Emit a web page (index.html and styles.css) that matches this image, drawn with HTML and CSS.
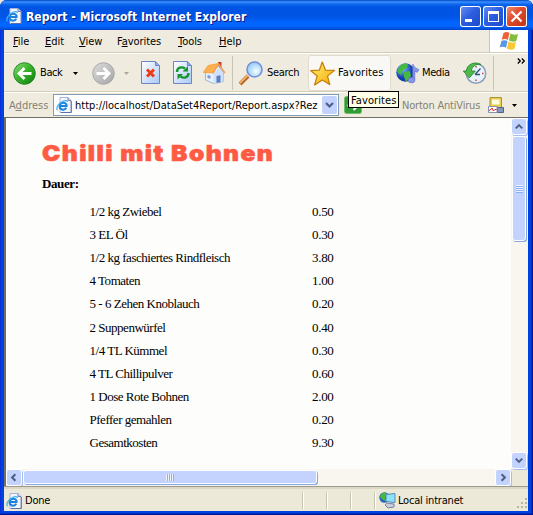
FILE: index.html
```
<!DOCTYPE html>
<html lang="de">
<head>
<meta charset="utf-8">
<title>Report - Microsoft Internet Explorer</title>
<link rel="stylesheet" href="styles.css">
</head>
<body>
<svg class="defs" width="0" height="0">
  <defs>
    <linearGradient id="green" x1="0" y1="0" x2="1" y2="1"><stop offset="0" stop-color="#8fdc7d"/><stop offset=".45" stop-color="#3bb52c"/><stop offset="1" stop-color="#0c7c0c"/></linearGradient>
    <linearGradient id="gray" x1="0" y1="0" x2="1" y2="1"><stop offset="0" stop-color="#dcdcdc"/><stop offset="1" stop-color="#a5a5a5"/></linearGradient>
    <linearGradient id="paper" x1="0" y1="0" x2="1" y2="1"><stop offset="0" stop-color="#fff"/><stop offset="1" stop-color="#aac8f8"/></linearGradient>
    <linearGradient id="gold" x1="0" y1="0" x2="1" y2="1"><stop offset="0" stop-color="#fff27a"/><stop offset="1" stop-color="#f5a800"/></linearGradient>
    <radialGradient id="lens" cx=".6" cy=".6"><stop offset="0" stop-color="#f4fdff"/><stop offset="1" stop-color="#a5d4fb"/></radialGradient>
    <radialGradient id="globe" cx=".35" cy=".3"><stop offset="0" stop-color="#7cc4ff"/><stop offset="1" stop-color="#123cae"/></radialGradient>
    <symbol id="ie" viewBox="0 0 16 16">
      <path d="M4 .5h8l3 3v12H4z" fill="#f2f7ff" stroke="#a5b4dc"/>
      <path d="M12 .5v3h3" fill="#c5d5f4" stroke="#7180b4"/>
      <path d="M15.300 4v11.500H5" fill="none" stroke="#5e6ca6"/>
      <path d="M10.300 10.800c-1 1.700-2.600 2.200-4.200 1.700-1.700-.5-2.700-1.800-2.400-3.500.3-2 2-3.300 3.900-3.200 2.100.1 3.200 1.500 3 3.200H4.500" fill="none" stroke="#1b83dc" stroke-width="2"/>
      <path d="M1.500 13.200C-.5 10.500 3 6 7 4.200c2.200-1 4.400-.9 4.300.8" fill="none" stroke="#45aeec" stroke-width="1.200"/>
    </symbol>
  </defs>
</svg>
<div class="window">
  <header class="titlebar">
    <svg class="title-icon" width="16" height="16"><use href="#ie"/></svg>
    <h1 class="title">Report - Microsoft Internet Explorer</h1>
    <div class="caption">
      <svg class="cap-btn" viewBox="0 0 21 21"><path d="M5 13h7v3H5z" fill="#fff"/></svg>
      <svg class="cap-btn" viewBox="0 0 21 21"><path d="M5 5h11v11H5zM6 8v7h9V8z" fill="#fff" fill-rule="evenodd"/></svg>
      <svg class="cap-btn close" viewBox="0 0 21 21"><path d="M5.500 5.500l10 10m0-10l-10 10" stroke="#fff" stroke-width="2.200"/></svg>
    </div>
  </header>

  <nav class="menubar">
    <span class="menu m-file"><u>F</u>ile</span>
    <span class="menu m-edit"><u>E</u>dit</span>
    <span class="menu m-view"><u>V</u>iew</span>
    <span class="menu m-fav">F<u>a</u>vorites</span>
    <span class="menu m-tools"><u>T</u>ools</span>
    <span class="menu m-help"><u>H</u>elp</span>
    <span class="flag">
      <svg width="20" height="20" viewBox="0 0 20 20">
        <path d="M4.500 2Q7.500.2 10.500 2L8.800 9Q6 7.300 2.700 8.700z" fill="#ed6137"/>
        <path d="M11.500 2.500q3.500 2 7.500.5L17.300 10q-3.800 1.500-7.500-.5z" fill="#83bd3b"/>
        <path d="M2.500 9.700Q5.500 8.500 8.600 10L7 16.800Q4 15 .7 16.500z" fill="#5797e5"/>
        <path d="M9.500 10.500q3.500 2 7.500.5L15.300 18q-3.800 1.500-7.500-.5z" fill="#f9c830"/>
      </svg>
    </span>
  </nav>

  <div class="toolbar">
    <svg class="i-back" width="23" height="23" viewBox="0 0 23 23"><circle cx="11.500" cy="11.500" r="10.800" fill="url(#green)" stroke="#26882a"/><path d="M18.500 11.500H6m5.500-5.500L6 11.500l5.500 5.500" fill="none" stroke="#fff" stroke-width="2.800"/></svg>
    <span class="t-back">Back</span>
    <svg class="i-drop" width="5" height="3"><path d="M0 0h5L2.500 3z" fill="#000"/></svg>
    <svg class="i-fwd" width="23" height="23" viewBox="0 0 23 23"><circle cx="11.500" cy="11.500" r="10.800" fill="url(#gray)" stroke="#a8a8a8"/><path d="M4.500 11.500H17m-5.500-5.500l5.500 5.500-5.500 5.500" fill="none" stroke="#fff" stroke-width="2.800"/></svg>
    <svg class="i-drop2" width="5" height="3"><path d="M0 0h5L2.500 3z" fill="#aca899"/></svg>
    <svg class="i-stop" width="20" height="24" viewBox="0 0 20 24"><path d="M.5.500h14l4 4v18H.5z" fill="url(#paper)" stroke="#6e83c8"/><path d="M14.500.5v4h4" fill="#8daaf0" stroke="#6e83c8"/><path d="M6 8.500l7 7m0-7l-7 7" stroke="#f03b12" stroke-width="3"/></svg>
    <svg class="i-refresh" width="20" height="24" viewBox="0 0 20 24"><path d="M.5.500h14l4 4v18H.5z" fill="url(#paper)" stroke="#6e83c8"/><path d="M14.500.5v4h4" fill="#8daaf0" stroke="#6e83c8"/><path d="M4 11c0-5 5-5.500 8-3.500m3.500 4.500c0 5-5 5.500-8 3.500" fill="none" stroke="#15952a" stroke-width="2.400"/><path d="M9.500 10.500H15V5zM10 13H4.500v5.500z" fill="#15952a"/></svg>
    <svg class="i-home" width="23" height="24" viewBox="0 0 23 24"><path d="M15 1h3.500v6H15z" fill="#c64032"/><path d="M2.500 11l6-1 7-5 5 7v8.500l-10 2-8-3.500z" fill="#e8f1ff" stroke="#8da3cb" stroke-width=".8"/><path d="M10.500 13l5-6 5 6v7.500l-10 2z" fill="#cfe0fa"/><path d="M.3 11.500L5 4.500l10.500-2L9.500 12z" fill="#ffb04e" stroke="#ee9730" stroke-width=".7"/><path d="M9.700 12.500l5.800-9.300 6.500 8.800" fill="none" stroke="#f0a353" stroke-width="1.500"/><path d="M13.500 15l4-.7v7l-4 .8z" fill="#5b80bf"/><path d="M4.500 14l3 .8v3l-3-.8z" fill="#7696d2"/></svg>
    <i class="sep sep-1"></i>
    <svg class="i-search" width="24" height="25" viewBox="0 0 24 25"><path d="M1 23l8-8" stroke="#b96a2b" stroke-width="4"/><path d="M1 22l8-8" stroke="#ffc27a" stroke-width="1.500"/><circle cx="15.500" cy="8.500" r="7.500" fill="url(#lens)" stroke="#7290dc" stroke-width="1.600"/></svg>
    <span class="t-search">Search</span>
    <div class="hot">
      <svg class="i-star" width="25" height="25" viewBox="0 0 25 25"><path d="M12.300 1l3.200 8.200 9 .2-7 5.700 2.300 8.500-7.500-4.700-7.700 5 2.600-8.900L.8 9.700l8.500-.5z" fill="url(#gold)" stroke="#c77d08" stroke-width="1.200" stroke-linejoin="round"/></svg>
      <span class="t-fav">Favorites</span>
    </div>
    <svg class="i-media" width="24" height="22" viewBox="0 0 24 22"><circle cx="9.500" cy="10.500" r="9.300" fill="url(#globe)"/><path d="M3 5q4-5 9-3l-1 4-4 2-2 5-4-3zM8 10l6-1 1 5-5 6-2-5z" fill="#45ba3e"/><path d="M16.800 18V2q1 4 6 5.500-1 4.500-4 1.500V18" fill="#8795e8" stroke="#6a78cc" stroke-width=".7"/><ellipse cx="15.500" cy="18.200" rx="3.400" ry="2.700" fill="#8795e8" stroke="#6a78cc" stroke-width=".7"/></svg>
    <span class="t-media">Media</span>
    <svg class="i-hist" width="24" height="23" viewBox="0 0 24 23"><circle cx="13" cy="11.500" r="9.700" fill="#e7f4fd" stroke="#8ba0b5" stroke-width="1.500"/><path d="M13 4v1.500M13 17.500V19M19 11.500h1.500" stroke="#d23c3c" stroke-width="1.500"/><path d="M12 12.500l5.500-6M12 12.500h5" stroke="#36536f" stroke-width="1.300"/><path d="M18 2.500C11-1.500 3.500 3 3.500 9H.3l6 7 6-7H8.500c0-4 4-7.500 9.500-6.500z" fill="#4fba49" stroke="#238029" stroke-width=".8"/></svg>
    <i class="sep sep-2"></i>
    <svg class="i-more" width="9" height="6" viewBox="0 0 9 6"><path d="M.8.500L3.300 3 .8 5.500M4.800.5L7.300 3 4.800 5.500" fill="none" stroke="#000" stroke-width="1.300"/></svg>
  </div>

  <div class="addressbar">
    <span class="t-addr">A<u>d</u>dress</span>
    <div class="combo">
      <svg width="16" height="16"><use href="#ie"/></svg>
      <span class="url">http://localhost/DataSet4Report/Report.aspx?Rez</span>
      <svg class="combo-btn" viewBox="0 0 15 18"><path d="M4 7l3.500 3.500L11 7" fill="none" stroke="#4d6185" stroke-width="2.200"/></svg>
    </div>
    <div class="go">
      <svg width="18" height="18" viewBox="0 0 18 18"><rect x=".5" y=".5" width="17" height="17" rx="2" fill="#329c34" stroke="#71bd70"/><path d="M3.500 9.500h10M9.500 5l4.500 4.500L9.500 14" fill="none" stroke="#fff" stroke-width="2.200"/></svg>
      <span class="t-go">Go</span>
      <span class="tooltip">Favorites</span>
    </div>
    <span class="t-norton">Norton AntiVirus</span>
    <svg class="i-norton" width="16" height="16" viewBox="0 0 16 16"><path d="M2 .5h11.500v10H2z" fill="#e8cf45" stroke="#a8923c"/><path d="M4 2.500h7.500v5H4z" fill="#fffce0"/><path d="M9.500 10.500h6v5h-6z" fill="#8597c0" stroke="#50648e"/><path d="M.5 9.500h8.500v6H.5z" fill="#fff" stroke="#8a93ae"/><path d="M1 13.500l2-1 1-1.500 1.500 3L7 12.500h1.500" fill="none" stroke="#e32020"/></svg>
    <svg class="i-drop3" width="5" height="3"><path d="M0 0h5L2.500 3z" fill="#000"/></svg>
  </div>

  <div class="viewport">
    <main class="page">
      <h2 class="recipe">Chilli mit Bohnen</h2>
      <p class="duration">Dauer:</p>
      <div class="items">
        <span>1/2 kg Zwiebel</span><span class="num">0.50</span>
        <span>3 EL Öl</span><span class="num">0.30</span>
        <span>1/2 kg faschiertes Rindfleisch</span><span class="num">3.80</span>
        <span>4 Tomaten</span><span class="num">1.00</span>
        <span>5 - 6 Zehen Knoblauch</span><span class="num">0.20</span>
        <span>2 Suppenwürfel</span><span class="num">0.40</span>
        <span>1/4 TL Kümmel</span><span class="num">0.30</span>
        <span>4 TL Chillipulver</span><span class="num">0.60</span>
        <span>1 Dose Rote Bohnen</span><span class="num">2.00</span>
        <span>Pfeffer gemahlen</span><span class="num">0.20</span>
        <span>Gesamtkosten</span><span class="num">9.30</span>
      </div>
    </main>
    <div class="vscroll">
      <svg class="sb" viewBox="0 0 15 15"><path d="M4 9.500L7.500 6 11 9.500" fill="none" stroke="#4d6185" stroke-width="2.200"/></svg>
      <div class="vthumb"><i class="grip"></i></div>
      <svg class="sb down" viewBox="0 0 15 15"><path d="M4 5.500L7.500 9 11 5.500" fill="none" stroke="#4d6185" stroke-width="2.200"/></svg>
    </div>
    <div class="hscroll">
      <svg class="sb" viewBox="0 0 15 15"><path d="M9 4L5.500 7.500 9 11" fill="none" stroke="#4d6185" stroke-width="2.200"/></svg>
      <div class="hthumb"><i class="grip side"></i></div>
      <svg class="sb right" viewBox="0 0 15 15"><path d="M6 4l3.500 3.500L6 11" fill="none" stroke="#4d6185" stroke-width="2.200"/></svg>
    </div>
    <div class="corner"></div>
  </div>

  <footer class="status">
    <svg width="16" height="16"><use href="#ie"/></svg>
    <span class="t-done">Done</span>
    <i class="pane first"></i><i class="pane"></i><i class="pane"></i><i class="pane last"></i>
    <svg class="i-net" width="17" height="17" viewBox="0 0 17 17"><circle cx="5.500" cy="5.500" r="5.200" fill="#2463c4"/><path d="M2 2q4-3 6 0L6 5l1 4-3-1-3-3z" fill="#4ab83e"/><path d="M7 2.500l9-1v9l-9-1z" fill="#8ee1fa" stroke="#588bb9"/><path d="M8 11l7 1v3l-6 1-3-3z" fill="#c7cdda" stroke="#7985a5"/></svg>
    <span class="t-zone">Local intranet</span>
    <svg class="size-grip" width="11" height="11" viewBox="0 0 11 11"><path d="M8 0h2v2H8zM4 4h2v2H4zM8 4h2v2H8zM0 8h2v2H0zM4 8h2v2H4zM8 8h2v2H8z" fill="#b8b4a3"/></svg>
  </footer>
</div>
</body>
</html>
```
FILE: styles.css
```
* { box-sizing: border-box; }

body {
  margin: 0;
  background: #ece9d8;
  font: 11px/14px "DejaVu Sans Condensed", "DejaVu Sans", sans-serif;
  color: #000;
}

.defs { position: absolute; }

svg, i { display: block; flex: none; }

span { white-space: nowrap; }

u { text-underline-offset: 1px; text-decoration-thickness: 1px; }

.window {
  width: 533px;
  height: 515px;
  padding: 0 5px 4px 4px;
  display: flex;
  flex-direction: column;
  overflow: hidden;
  background: #0042e0;
  border-radius: 7px 7px 0 0;
  box-shadow: inset -1px -1px #00138c, inset 1px 0 #0831d9, inset -2px -2px #0030c4;
}

/* Title bar */
.titlebar {
  flex: none;
  height: 30px;
  margin: 0 -5px 0 -4px;
  padding: 3px 5px 0 6px;
  display: flex;
  align-items: center;
  background: linear-gradient(#0148c8 0, #3b90ff 2px, #1068ee 4px, #0054e3 7px, #0055e5 17px, #0265ff 22px, #0265ff 26px, #0050d8 29px, #003dd7);
}

.title-icon { margin-bottom: 2px; }

.title {
  flex: 1;
  margin: 0 0 0 4px;
  font: bold 12px/16px "DejaVu Sans Condensed", sans-serif;
  letter-spacing: .04px;
  color: #fff;
  text-shadow: 1px 1px #0a1883;
  white-space: nowrap;
}

.caption { display: flex; gap: 2px; margin-right: 1px; }

.cap-btn {
  width: 21px;
  height: 21px;
  border-radius: 3px;
  box-shadow: inset 0 0 0 1px #fff;
  background: linear-gradient(135deg, #6c92f5, #2c5fe0 45%, #1c47c9);
}

.cap-btn.close { background: linear-gradient(135deg, #f0947c, #e0492a 45%, #bd3212); }

/* Menu */
.menubar {
  flex: none;
  height: 23px;
  padding: 0 0 0 9px;
  display: flex;
  align-items: center;
  background: #efecdf;
  border-bottom: 1px solid #d2ceba;
}

.m-file { width: 32px; }
.m-edit { width: 34px; }
.m-view { width: 38px; }
.m-fav { width: 61px; }
.m-tools { width: 41px; }
.menu { padding-top: 1px; letter-spacing: -.05px; }

.flag {
  align-self: stretch;
  width: 39px;
  margin-left: auto;
  display: grid;
  place-items: center;
  background: #fff;
  border-left: 1px solid #c9c5b2;
}

/* Toolbar */
.toolbar {
  flex: none;
  height: 39px;
  padding-top: 1px;
  display: flex;
  align-items: center;
  background: #efecdf;
  border-top: 1px solid #fff;
  border-bottom: 1px solid #d2ceba;
}

.i-back { margin-left: 9px; }
.t-back { width: 33px; margin-left: 4px; letter-spacing: -.4px; }
.i-fwd { margin-left: 14px; }
.i-drop2 { margin-left: 9px; }
.i-stop { margin-left: 12px; }
.i-refresh { margin-left: 12px; }
.i-home { margin-left: 10px; }
.sep { width: 1px; height: 34px; background: #c9c5b2; }
.sep-1 { margin-left: 6px; }
.i-search { margin-left: 6px; }
.t-search { width: 41px; margin-left: 4px; letter-spacing: -.3px; }

.hot {
  width: 83px;
  height: 36px;
  display: flex;
  align-items: center;
  background: #f9f8f4;
  border: 1px solid #dfdccf;
  border-radius: 3px;
}

.i-star { margin-left: 1px; }
.t-fav { margin-left: 3px; letter-spacing: .1px; }
.i-media { margin-left: 5px; }
.t-media { width: 41px; margin-left: 2px; letter-spacing: -.4px; }
.i-hist { margin-left: 0; }
.sep-2 { margin-left: 6px; }
.i-more { align-self: flex-start; margin: 3px 0 0 23px; }

/* Address bar */
.addressbar {
  flex: none;
  height: 25px;
  padding: 0 0 0 5px;
  display: flex;
  align-items: center;
  background: #efecdf;
  border-top: 1px solid #fff;
}

.addressbar > span, .url { padding-top: 1px; }

.t-addr { width: 44px; color: #848173; }

.combo {
  width: 286px;
  height: 22px;
  padding: 1px;
  display: flex;
  align-items: center;
  gap: 3px;
  background: #fff;
  border: 1px solid #7f9db9;
}

.combo > svg:first-child { margin-left: 1px; }
.url { width: 245px; overflow: hidden; }

.combo-btn {
  width: 15px;
  height: 18px;
  margin-left: -1px;
  background: #c3d3fd;
  border-radius: 2px;
}

.go { position: relative; width: 59px; padding-left: 5px; display: flex; align-items: center; gap: 6px; }

.tooltip {
  position: absolute;
  left: 9px;
  top: -5px;
  width: 51px;
  height: 17px;
  padding: 1px 0 0 2px;
  background: #ffffe8;
  border: 1px solid #000;
  line-height: 15px;
  letter-spacing: .1px;
}

.t-norton { width: 86px; margin-left: 4px; color: #848173; letter-spacing: -.2px; }
.i-drop3 { margin-left: 8px; }

/* Document */
.viewport {
  flex: 1;
  min-height: 0;
  display: grid;
  grid-template: 1fr 17px / 1fr 17px;
  background: #ece9d8;
  border: 1px solid #716f64;
  border-width: 1px 0 0 2px;
}

.page { min-width: 0; padding: 23px 0 0 36px; background: #fdfdfb; overflow: hidden; }

.recipe {
  width: max-content;
  margin: 0;
  font: 900 22px/24px Inter, "Liberation Sans", sans-serif;
  letter-spacing: 1.3px;
  color: #ff5a43;
  -webkit-text-stroke: .6px #ff5a43;
  transform: scaleX(1.114);
  transform-origin: 0 0;
  white-space: nowrap;
}

.duration { margin: 11px 0 9px; font: bold 13px/15px "Liberation Serif", serif; letter-spacing: -.4px; }

.items {
  display: grid;
  grid-template-columns: 222.500px 60px;
  grid-auto-rows: 23.1px;
  align-items: center;
  padding-left: 47.500px;
  font: 13px/15px "Liberation Serif", serif;
  letter-spacing: -.48px;
}

.num { letter-spacing: -.3px; }

.vscroll, .hscroll { display: flex; background: #f8f6ee; }
.vscroll { flex-direction: column; padding: 1px 0 1px 1px; }
.hscroll { padding: 1px; }

.sb {
  width: 14px;
  height: 15px;
  background: #c3d3fd;
  border-radius: 2px;
  box-shadow: 0 0 0 1px #fff, 1px 1px 0 1px #a6bdf0;
}

.down { margin-top: auto; }
.right { margin-left: auto; }

.vthumb, .hthumb {
  display: grid;
  place-items: center;
  background: #c3d3fd;
  border: 1px solid #fff;
  border-radius: 3px;
  box-shadow: 1px 1px #86a7e5;
}

.vthumb { width: 14px; height: 105px; margin-top: 2px; }
.hthumb { width: 294px; height: 14px; margin-left: 2px; }
.grip { width: 7px; height: 8px; background: repeating-linear-gradient(#eef4fe 0 1px, #8cb0f8 1px 2px); }
.side { width: 8px; height: 7px; background: repeating-linear-gradient(90deg, #eef4fe 0 1px, #8cb0f8 1px 2px); }

/* Status bar */
.status {
  flex: none;
  height: 25px;
  padding: 3px 0 0 2px;
  display: flex;
  align-items: center;
  background: #ece9d8;
  border-top: 1px solid #9d9a8b;
  box-shadow: inset 0 2px #dbd8c8;
}

.t-done { width: 277px; margin-left: 3px; letter-spacing: -.2px; }
.pane { width: 24px; height: 17px; border-left: 1px solid #c9c5b2; box-shadow: inset 1px 0 #fff; }
.pane.last { width: 5px; }
.t-zone { margin-left: 2px; letter-spacing: -.2px; }
.size-grip { margin: 6px 0 0 auto; }
```
